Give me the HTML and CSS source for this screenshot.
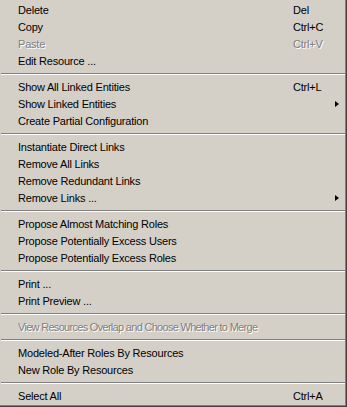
FILE: index.html
```html
<!DOCTYPE html>
<html>
<head>
<meta charset="utf-8">
<link rel="stylesheet" href="styles.css">
</head>
<body>
<div class="menu">
  <div class="item"><span class="label">Delete</span><span class="key">Del</span></div>
  <div class="item"><span class="label">Copy</span><span class="key">Ctrl+C</span></div>
  <div class="item disabled"><span class="label">Paste</span><span class="key">Ctrl+V</span></div>
  <div class="item"><span class="label">Edit Resource ...</span></div>
  <div class="sep"></div>
  <div class="item"><span class="label">Show All Linked Entities</span><span class="key">Ctrl+L</span></div>
  <div class="item"><span class="label">Show Linked Entities</span><span class="arrow"></span></div>
  <div class="item"><span class="label">Create Partial Configuration</span></div>
  <div class="sep"></div>
  <div class="item"><span class="label">Instantiate Direct Links</span></div>
  <div class="item"><span class="label">Remove All Links</span></div>
  <div class="item"><span class="label">Remove Redundant Links</span></div>
  <div class="item"><span class="label">Remove Links ...</span><span class="arrow"></span></div>
  <div class="sep"></div>
  <div class="item"><span class="label">Propose Almost Matching Roles</span></div>
  <div class="item"><span class="label">Propose Potentially Excess Users</span></div>
  <div class="item"><span class="label">Propose Potentially Excess Roles</span></div>
  <div class="sep"></div>
  <div class="item"><span class="label">Print ...</span></div>
  <div class="item"><span class="label">Print Preview ...</span></div>
  <div class="sep"></div>
  <div class="item disabled"><span class="label narrow">View Resources Overlap and Choose Whether to Merge</span></div>
  <div class="sep"></div>
  <div class="item"><span class="label">Modeled-After Roles By Resources</span></div>
  <div class="item"><span class="label">New Role By Resources</span></div>
  <div class="sep"></div>
  <div class="item"><span class="label">Select All</span><span class="key">Ctrl+A</span></div>
</div>
</body>
</html>
```

FILE: styles.css
```css
html, body {
  margin: 0;
  padding: 0;
  background: #d4d0c8;
}

.menu {
  width: 347px;
  height: 407px;
  box-sizing: border-box;
  background: #d4d0c8;
  padding-top: 2px;
  border-right: 1px solid #404040;
  border-bottom: 1px solid #404040;
  box-shadow: inset -1px -1px 0 #808080;
  font-family: "Liberation Sans", Arial, sans-serif;
  font-size: 11px;
  letter-spacing: -0.2px;
  color: #000;
  overflow: hidden;
}

.item {
  position: relative;
  display: grid;
  grid-template-columns: 293px 1fr;
  height: 17px;
  line-height: 17px;
  white-space: nowrap;
}

.label {
  padding-left: 18px;
  overflow: visible;
}

.narrow {
  letter-spacing: -0.7px;
}

.key {
  grid-column: 2;
}

.disabled {
  color: #808080;
  text-shadow: 1px 1px 0 #ffffff;
}

.arrow {
  position: absolute;
  left: 335px;
  top: 5px;
  width: 0;
  height: 0;
  border-left: 4px solid #000;
  border-top: 3.5px solid transparent;
  border-bottom: 3.5px solid transparent;
}

.sep {
  height: 9px;
  box-sizing: border-box;
  padding-top: 3px;
  margin: 0 1px 0 1px;
}

.sep::before {
  content: "";
  display: block;
  height: 1px;
  background: #808080;
  border-bottom: 1px solid #ffffff;
}
```
